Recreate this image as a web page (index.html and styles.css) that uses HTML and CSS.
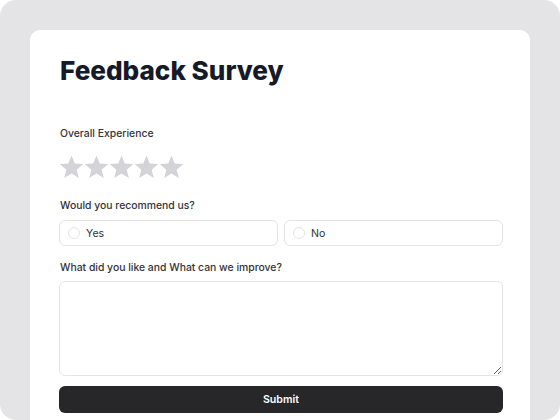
FILE: index.html
```html
<!DOCTYPE html>
<html>
<head>
<meta charset="utf-8">
<link rel="stylesheet" href="styles.css">
</head>
<body>
<div class="frame">
  <div class="card">
    <h1 class="title">Feedback Survey</h1>
    <div class="field field-rating">
      <div class="label">Overall Experience</div>
      <div class="stars">
        <svg class="star" viewBox="0 0 24 24"><path d="M12 1.5l3.1 7.6 8.2.6-6.3 5.3 2 8-7-4.4-7 4.4 2-8L.7 9.7l8.2-.6z"/></svg>
        <svg class="star" viewBox="0 0 24 24"><path d="M12 1.5l3.1 7.6 8.2.6-6.3 5.3 2 8-7-4.4-7 4.4 2-8L.7 9.7l8.2-.6z"/></svg>
        <svg class="star" viewBox="0 0 24 24"><path d="M12 1.5l3.1 7.6 8.2.6-6.3 5.3 2 8-7-4.4-7 4.4 2-8L.7 9.7l8.2-.6z"/></svg>
        <svg class="star" viewBox="0 0 24 24"><path d="M12 1.5l3.1 7.6 8.2.6-6.3 5.3 2 8-7-4.4-7 4.4 2-8L.7 9.7l8.2-.6z"/></svg>
        <svg class="star" viewBox="0 0 24 24"><path d="M12 1.5l3.1 7.6 8.2.6-6.3 5.3 2 8-7-4.4-7 4.4 2-8L.7 9.7l8.2-.6z"/></svg>
      </div>
    </div>
    <div class="field">
      <div class="label">Would you recommend us?</div>
      <div class="options">
        <label class="option"><span class="radio"></span>Yes</label>
        <label class="option"><span class="radio"></span>No</label>
      </div>
    </div>
    <div class="field">
      <div class="label">What did you like and What can we improve?</div>
      <textarea class="textarea"></textarea>
    </div>
    <button class="submit">Submit</button>
  </div>
</div>
</body>
</html>
```

FILE: styles.css
```css
* { box-sizing: border-box; }
html, body { margin: 0; padding: 0; background: #ffffff; }
body { font-family: Inter, "Noto Sans", sans-serif; }
.frame {
  width: 560px;
  height: 420px;
  background: #e4e4e7;
  border-radius: 16px;
  padding: 30px 30px 0 30px;
  overflow: hidden;
}
.card {
  background: #ffffff;
  border-radius: 10px 10px 0 0;
  height: 100%;
  padding: 29px 27px 0 29px;
  display: flex;
  flex-direction: column;
}
.title {
  margin: 0;
  font-size: 26.1px;
  font-weight: 800;
  color: #151a2a;
  line-height: 24px;
  padding-left: 1px;
}
.field { display: flex; flex-direction: column; }
.field-rating { margin-top: 44px; }
.label {
  font-size: 10.4px;
  font-weight: 500;
  color: #333338;
  line-height: 14px;
  padding-left: 1px;
}
.stars { display: flex; gap: 0; margin-top: 13px; margin-bottom: 20px; }
.star { width: 25px; height: 25px; fill: #d4d4d8; }
.options { display: flex; gap: 6px; margin-top: 7px; margin-bottom: 15px; }
.option {
  flex: 1;
  height: 26px;
  border: 1px solid #e4e4e7;
  border-radius: 6px;
  display: flex;
  align-items: center;
  padding-left: 8px;
  font-size: 10.6px;
  font-weight: 400;
  color: #333338;
  gap: 6px;
}
.radio {
  width: 12px;
  height: 12px;
  border: 1px solid #e4e4e7;
  border-radius: 50%;
}
.textarea {
  margin-top: 6px;
  height: 95px;
  border: 1px solid #e4e4e7;
  border-radius: 6px;
  resize: vertical;
  font-family: inherit;
}
.submit {
  margin-top: 10px;
  height: 27px;
  background: #27272a;
  color: #ffffff;
  border: none;
  border-radius: 6px;
  font-family: inherit;
  font-size: 10.6px;
  font-weight: 600;
}
```
